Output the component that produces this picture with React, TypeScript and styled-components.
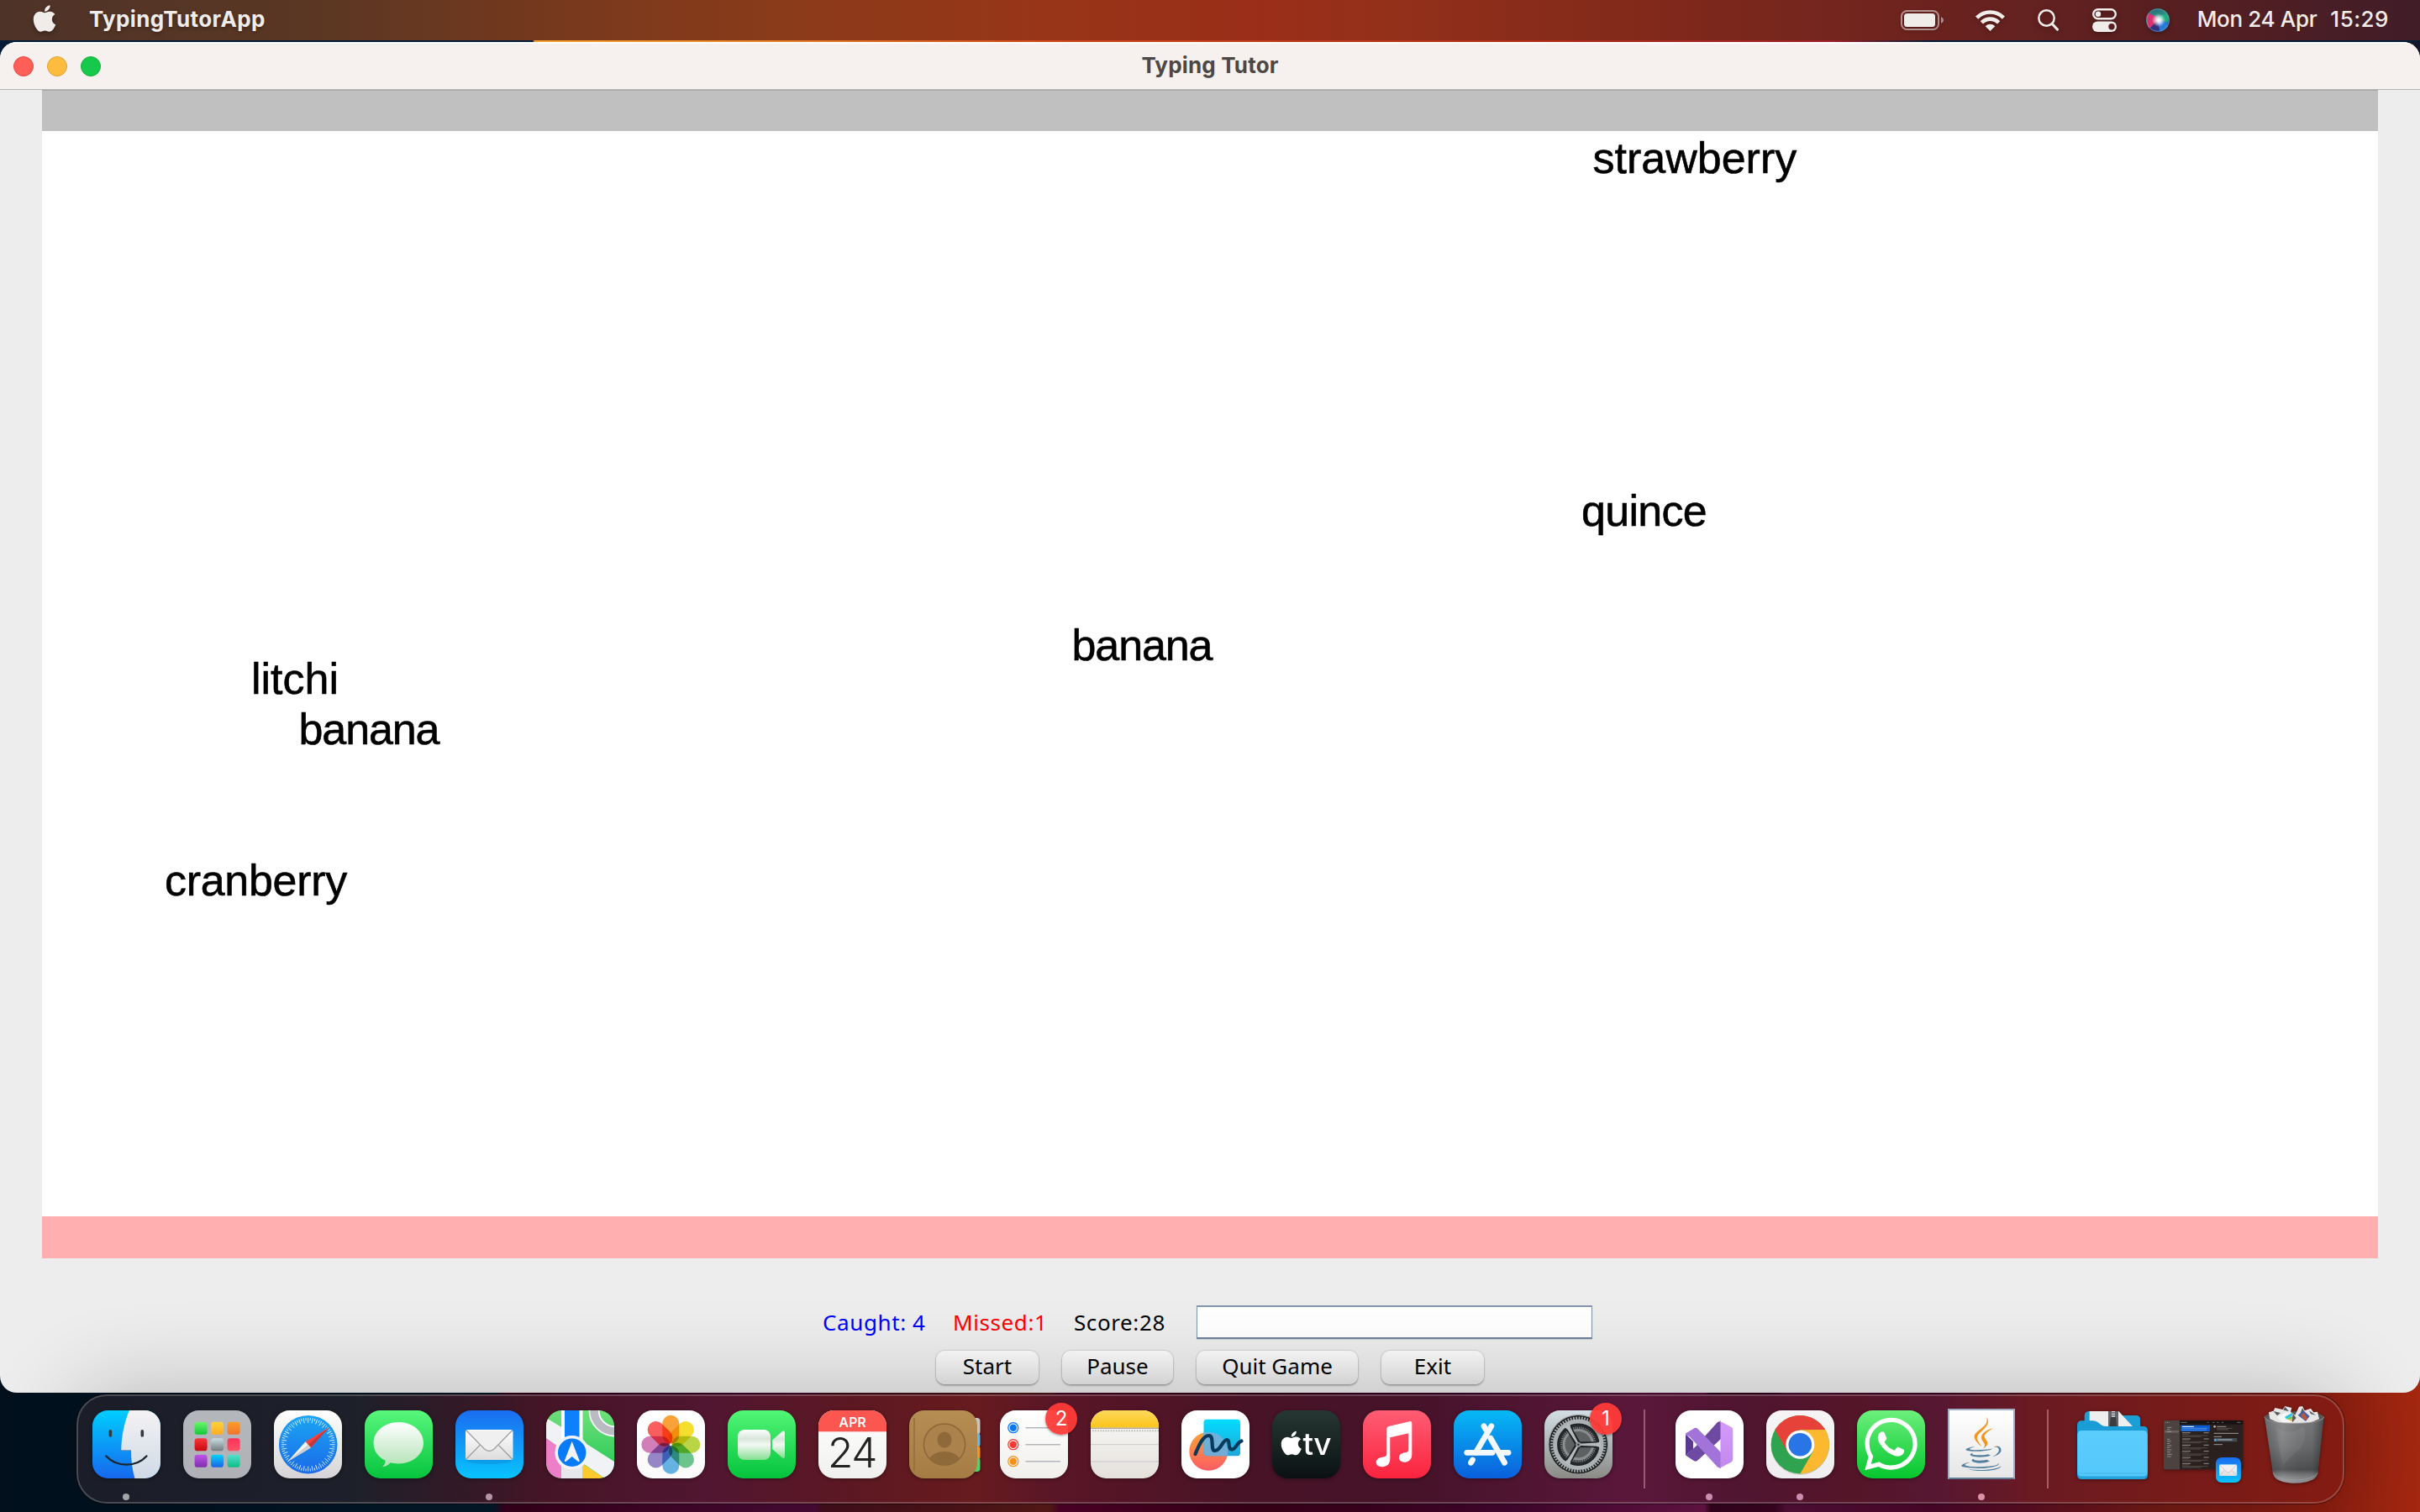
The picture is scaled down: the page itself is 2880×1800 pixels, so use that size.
import React from "react";
import styled, { createGlobalStyle } from "styled-components";
import { FaApple, FaJava, FaWhatsapp } from "react-icons/fa";

const Global = createGlobalStyle`
  * { box-sizing: border-box; }
  html, body { margin: 0; padding: 0; overflow: hidden; }
`;

/* ---------- Desktop ---------- */

const Desktop = styled.div`
  width: 2880px;
  height: 1800px;
  overflow: hidden;
  display: flex;
  flex-direction: column;
  font-family: Inter, "Liberation Sans", sans-serif;
  background:
    linear-gradient(90deg, #001c36 0 634px, #f5a02a 636px, #e8862a 900px, #d2481c 1250px, #b02a18 1900px, #a01e26 2180px, #001c36 2300px, #001c36 100%) 0 48px / 2880px 2px no-repeat,
    linear-gradient(90deg, #001a33 0 1440px, #14142c 2880px) 0 0 / 2880px 900px no-repeat,
    linear-gradient(90deg, #00101c 0, #031a2b 588px, #38001c 600px, #4d0b38 970px, #450f1b 980px, #5a1a18 1250px, #52002a 1262px, #3a0018 1500px, #450630 1800px, #6a1547 2028px, #36031f 2036px, #3c0422 2112px, #55103a 2126px, #4d062c 2300px, #741a16 2560px, #8a1d10 2760px, #a52810 2880px) 0 900px / 2880px 900px no-repeat;
`;

const MenuBar = styled.header`
  flex: none;
  height: 48px;
  display: flex;
  align-items: center;
  padding: 0 37px 0 39px;
  color: #efecea;
  font-size: 26px;
  line-height: 48px;
  background: linear-gradient(90deg, #4e3328 0, #5b3723 380px, #7a391c 700px, #8a3b1a 930px, #983518 1250px, #9a2d18 1500px, #93301a 1650px, #7f281b 2000px, #6c231f 2300px, #561f21 2600px, #401d28 2880px);
`;

const AppleMark = styled(FaApple)`
  width: 28px;
  height: 36px;
  margin-top: -4px;
  filter: drop-shadow(0 2px 3px rgba(0, 0, 0, 0.35));
`;

const AppName = styled.span`
  margin: -3px auto 0 39px;
  font-weight: 700;
  letter-spacing: 0.36px;
  text-shadow: 0 2px 4px rgba(0, 0, 0, 0.3);
`;

const StatusIcon = styled.svg<{ $gap: number }>`
  flex: none;
  display: block;
  margin-right: ${(p) => p.$gap}px;
  filter: drop-shadow(0 2px 3px rgba(0, 0, 0, 0.3));
`;

const Clock = styled.time`
  display: flex;
  gap: 16px;
  margin-top: -3px;
  white-space: nowrap;
  font-weight: 500;
`;

const ClockPart = styled.span<{ $tracking: number }>`
  letter-spacing: ${(p) => p.$tracking}px;
`;

/* ---------- Window ---------- */

const Window = styled.main`
  flex: none;
  height: 1608px;
  margin-top: 2px;
  display: flex;
  flex-direction: column;
  overflow: hidden;
  border-radius: 20px;
  background: #ededed;
`;

const TitleBar = styled.div`
  flex: none;
  height: 57px;
  display: grid;
  grid-template-columns: 1fr auto 1fr;
  align-items: center;
  padding: 0 16px;
  background: #f6f0ee;
  border-top: 2px solid #fff;
  border-bottom: 1px solid #b9b5b4;
`;

const Lights = styled.div`
  display: flex;
  gap: 16px;
`;

const Light = styled.span<{ $fill: string; $rim: string }>`
  width: 24px;
  height: 24px;
  border-radius: 50%;
  background: ${(p) => p.$fill};
  border: 1px solid ${(p) => p.$rim};
`;

const Title = styled.h1`
  margin: -3px 0 0;
  font-size: 26px;
  line-height: 50px;
  font-weight: 700;
  letter-spacing: 0.18px;
  color: #4b4846;
`;

const Board = styled.section`
  position: relative;
  flex: none;
  height: 1391px;
  margin: 0 50px;
  display: flex;
  flex-direction: column;
  justify-content: space-between;
  background: #fff;
`;

const Zone = styled.div<{ $color: string; $height: number; $edge?: string }>`
  height: ${(p) => p.$height}px;
  background: ${(p) => p.$color};
  border-top: ${(p) => (p.$edge ? `1px solid ${p.$edge}` : "none")};
`;

const FallingWord = styled.span<{ $x: number; $y: number; $tracking: number }>`
  position: absolute;
  left: ${(p) => p.$x}px;
  top: ${(p) => p.$y}px;
  font: 52px/60px "Liberation Sans", Arial, sans-serif;
  letter-spacing: ${(p) => p.$tracking}px;
  -webkit-text-stroke: 0.6px #000;
  color: #000;
`;

const Controls = styled.section`
  flex: 1;
  display: flex;
  flex-direction: column;
  align-items: center;
  padding-top: 56px;
  font-family: "Noto Sans", "Open Sans", sans-serif;
  font-size: 26px;
`;

const ScoreRow = styled.div`
  display: flex;
  align-items: center;
  height: 39px;
  margin-right: 6px;
`;

const Stat = styled.span<{ $color: string; $width: number }>`
  width: ${(p) => p.$width}px;
  color: ${(p) => p.$color};
  letter-spacing: 0.6px;
  line-height: 38px;
  white-space: pre;
`;

const WordInput = styled.input`
  width: 471px;
  height: 40px;
  margin: 0;
  padding: 0 8px;
  border: 2px solid #8195ad;
  border-top-color: #8496ae;
  border-bottom-color: #718296;
  border-left: 1px solid #8195ad;
  border-right: 1px solid #8195ad;
  background: #fff;
  box-shadow: 0 1px 1px #cfd5dc;
  outline: none;
  font: inherit;
`;

const ButtonRow = styled.div`
  display: flex;
  gap: 28px;
  margin-top: 15px;
`;

const PushButton = styled.button<{ $width: number }>`
  width: ${(p) => p.$width}px;
  height: 40px;
  padding: 0 0 3px;
  border: 0;
  border-radius: 10px;
  background: linear-gradient(#fbfbfb, #f4f4f4 50%, #e9e9e9);
  box-shadow: 0 0 2px rgba(0, 0, 0, 0.35), 0 2px 2px rgba(0, 0, 0, 0.22);
  color: #000;
  font: inherit;
  line-height: 37px;
  white-space: nowrap;
`;

/* ---------- Dock ---------- */

const DockBar = styled.nav`
  position: relative;
  flex: none;
  align-self: flex-start;
  width: 2699px;
  height: 130px;
  margin: 2px 0 0 91px;
  padding-left: 3px;
  display: flex;
  border: 2px solid rgba(255, 255, 255, 0.2);
  border-radius: 36px;
  background-clip: border-box;
  background-origin: border-box;
  background-image: linear-gradient(90deg, #1b1e29 0, #1d202a 330px, #2c1b27 420px, #451526 560px, #521631 760px, #5c1822 920px, #671b1e 1070px, #5a1627 1160px, #481326 1390px, #46132a 1600px, #5a173a 1850px, #501530 1980px, #551529 2120px, #561732 2210px, #6a1a22 2330px, #751b1a 2480px, #841b12 2699px);
  box-shadow: 0 0 0 1px rgba(0, 0, 0, 0.45), 0 0 110px rgba(0, 0, 0, 0.24);
`;

const Slot = styled.div`
  position: relative;
  flex: none;
  width: 108px;
  height: 126px;
  padding-top: 17px;
  display: flex;
  flex-direction: column;
  align-items: center;
  justify-content: space-between;
`;

const Running = styled.i<{ $tint: string }>`
  width: 8px;
  height: 8px;
  margin-bottom: 2px;
  border-radius: 50%;
  background: ${(p) => p.$tint};
`;

const Divider = styled.i`
  flex: none;
  width: 2px;
  height: 94px;
  margin: 16px 22px 0 24px;
  background: rgba(255, 190, 210, 0.4);
`;

const Badge = styled.span`
  position: absolute;
  left: 68px;
  top: 8px;
  width: 38px;
  height: 38px;
  border-radius: 50%;
  background: rgba(255, 59, 56, 0.95);
  color: #fff;
  font-size: 24px;
  line-height: 38px;
  text-align: center;
  box-shadow: 0 1px 3px rgba(0, 0, 0, 0.4);
`;

const Art = styled.svg`
  flex: none;
  display: block;
  overflow: visible;
  filter: drop-shadow(0 1px 2px rgba(0, 0, 0, 0.4));
`;

const JavaPage = styled.div`
  flex: none;
  display: flex;
  justify-content: center;
  width: 80px;
  height: 84px;
  margin-top: -2px;
  padding-top: 8px;
  background: linear-gradient(#fff, #e6e6e6);
  border: 2px solid #9fb0c4;
  border-bottom-color: #5f7a92;
`;

/* ---------- Icon art ---------- */

function Grad({ id, from, to }: { id: string; from: string; to: string }) {
  return (
    <linearGradient id={id} x1="0" y1="0" x2="0" y2="1">
      <stop offset="0" stopColor={from} />
      <stop offset="1" stopColor={to} />
    </linearGradient>
  );
}

function Tile({ id, from, to, children }: { id: string; from: string; to: string; children?: React.ReactNode }) {
  return (
    <Art width="81" height="81" viewBox="0 0 81 81">
      <defs>
        <Grad id={`${id}-bg`} from={from} to={to} />
        <clipPath id={`${id}-clip`}>
          <rect width="81" height="81" rx="18.5" />
        </clipPath>
      </defs>
      <g clipPath={`url(#${id}-clip)`}>
        <rect width="81" height="81" fill={`url(#${id}-bg)`} />
        {children}
      </g>
    </Art>
  );
}

const Finder = () => (
  <Tile id="finder" from="#00cdff" to="#1668ee">
    <defs><Grad id="finder-face" from="#f4f2f4" to="#cfdae6" /></defs>
    <path d="M44 0C38 14 34.5 30 34.3 47.3H46C46 60 47.5 71 50.4 81H81V0Z" fill="url(#finder-face)" />
    <path d="M34.3 47.6H46" stroke="#8d99a5" strokeWidth="1" />
    <path d="M21.4 24.7V30M59.3 24.7V30" stroke="#333a40" strokeWidth="3.6" strokeLinecap="round" />
    <path d="M16.4 54.5C29 68 52 68 64.4 54.5" fill="none" stroke="#1c252c" strokeWidth="2.4" strokeLinecap="round" />
  </Tile>
);

const padColors = [
  ["#6df56c", "#10c83b"], ["#ffd23e", "#ffac22"], ["#fd9d27", "#f2742c"],
  ["#f9353a", "#c40a10"], ["#c8dde2", "#747a7c"], ["#fd3458", "#ff5064"],
  ["#bd56ea", "#7f2cab"], ["#08d3fd", "#1a62e8"], ["#54dfcd", "#0fbc85"],
];
const Launchpad = () => (
  <Tile id="pad" from="#b4b7bc" to="#b0b1b6">
    {padColors.map(([a, b], i) => (
      <g key={i}>
        <defs><Grad id={`pad-${i}`} from={a} to={b} /></defs>
        <rect x={13.6 + (i % 3) * 19.5} y={13.8 + Math.floor(i / 3) * 19.5} width="15" height="15" rx="3.4" fill={`url(#pad-${i})`} />
      </g>
    ))}
  </Tile>
);

const Safari = () => (
  <Tile id="safari" from="#ffffff" to="#d6d4d6">
    <defs><Grad id="safari-dial" from="#1ba5f3" to="#1a6ae8" /></defs>
    <circle cx="40.7" cy="40.7" r="34.8" fill="url(#safari-dial)" />
    {Array.from({ length: 72 }, (_, i) => (
      <path key={i} d={i % 2 ? "M40.7 8.8V12" : "M40.7 8.8V14.8"} stroke="#d9efff" strokeWidth="0.9" transform={`rotate(${i * 5} 40.7 40.7)`} />
    ))}
    <path d="M65.5 20.2L37.6 37.2L43.8 44.4Z" fill="#f0453f" />
    <path d="M65.5 20.2L40.7 40.7L43.8 44.4Z" fill="#c93638" />
    <path d="M16.2 61L37.6 37.2L43.8 44.4Z" fill="#f5f5f5" />
    <path d="M16.2 61L40.7 40.7L43.8 44.4Z" fill="#cfcfd2" />
  </Tile>
);

const Messages = () => (
  <Tile id="msg" from="#58f77c" to="#05c43d">
    <defs><Grad id="msg-b" from="#ffffff" to="#b2e2b5" /></defs>
    <path d="M40.3 14C57 14 70 25 70 38.7S57 63.4 40.3 63.4C37 63.4 33.5 63 30.6 62.3C28 65 25 67 21 67.3C23.5 65 25 62.5 24.5 59.8C16 55.5 10.5 48 10.5 38.7C10.5 25 24 14 40.3 14Z" fill="url(#msg-b)" />
  </Tile>
);

const Envelope = () => (
  <>
    <defs><Grad id="env" from="#ffffff" to="#dcdcdc" /></defs>
    <rect x="12" y="23" width="56.5" height="36" rx="3" fill="url(#env)" />
    <path d="M13 58L29 41.5M67.5 58L51.5 41.5" stroke="#9c9c9c" strokeWidth="1.1" />
    <path d="M13 24L34 45.5Q40.3 51.5 46.5 45.5L67.5 24" fill="#f0f0f0" stroke="#a3a3a3" strokeWidth="1.4" />
  </>
);

const Mail = () => (
  <Tile id="mail" from="#1a6df0" to="#08c4fd">
    <ellipse cx="40" cy="60" rx="27" ry="4" fill="#0a78c8" opacity="0.3" />
    <Envelope />
  </Tile>
);

const Maps = () => (
  <Tile id="maps" from="#6fe07a" to="#1fc552">
    <path d="M0 33L22 48V81H0Z" fill="#ec7fc8" />
    <path d="M41 62L70 81H41Z" fill="#fcc92e" />
    <path d="M0 9L20 21L42 36L81 61V81H70L42 62L20 47L0 33Z" fill="#f1f2f5" />
    <rect x="18" y="48" width="25" height="33" fill="#e6e6eb" />
    <rect x="18" y="0" width="25.5" height="50" fill="#fafafa" />
    <rect x="22" y="0" width="17.5" height="50" fill="#0f80fb" />
    <circle cx="82" cy="0" r="25" fill="none" stroke="#fff" strokeWidth="13" />
    <circle cx="82" cy="0" r="25" fill="none" stroke="#b9bac2" strokeWidth="9.5" />
    <circle cx="30.7" cy="50.3" r="18.5" fill="#087cf8" stroke="#f1f2f6" strokeWidth="3.6" />
    <path d="M30.7 37L39.5 59.5Q40 62 37.5 60.5L30.7 55L24 60.5Q21.5 62 22 59.5Z" fill="#f4f4f6" />
  </Tile>
);

const petals = ["#fb9a28", "#f6dd1c", "#b5d334", "#5fc283", "#59aee4", "#8e7fc6", "#d174b4", "#fb5150"];
const Petal = styled.rect`
  mix-blend-mode: multiply;
`;
const Photos = () => (
  <Tile id="photos" from="#ffffff" to="#fbfbfb">
    {petals.map((c, i) => (
      <Petal key={c} x="30.3" y="5.7" width="20" height="34" rx="10" fill={c} opacity="0.92" transform={`rotate(${i * 45} 40.3 40.7)`} />
    ))}
    <circle cx="40.3" cy="40.7" r="1.3" fill="#fff" />
  </Tile>
);

const FaceTime = () => (
  <Tile id="ft" from="#52f677" to="#04c33c">
    <defs>
      <linearGradient id="ft-b" x1="0" y1="0" x2="0" y2="1">
        <stop offset="0" stopColor="#fff" />
        <stop offset="0.3" stopColor="#d8e6da" />
        <stop offset="0.5" stopColor="#f3f8f3" />
        <stop offset="1" stopColor="#84df91" />
      </linearGradient>
    </defs>
    <rect x="12" y="23" width="39" height="36" rx="8" fill="url(#ft-b)" />
    <path d="M53 35.5L64.5 25.5Q68 23 68 27V54.5Q68 58.5 64.5 56L53 46Z" fill="url(#ft-b)" />
  </Tile>
);

const Calendar = () => (
  <Tile id="cal" from="#ffffff" to="#f0f0ee">
    <rect width="81" height="25.3" fill="#fb5650" />
    <text x="40.5" y="19.7" textAnchor="middle" fontFamily="Inter, sans-serif" fontWeight="600" fontSize="16" fill="#fff">APR</text>
    <text x="40" y="68.3" textAnchor="middle" fontFamily="Inter, sans-serif" fontWeight="300" fontSize="49.5" letterSpacing="-1.3" fill="#222">24</text>
  </Tile>
);

const Contacts = () => (
  <Art width="81" height="81" viewBox="0 0 81 81">
    <defs><Grad id="ct" from="#b58e54" to="#a67c45" /></defs>
    <rect x="66" y="9" width="18.5" height="20" rx="4" fill="#c9c6c0" />
    <rect x="66" y="27" width="18.5" height="17" rx="4" fill="#58bdf1" />
    <rect x="66" y="42" width="18.5" height="17" rx="4" fill="#fa9123" />
    <rect x="66" y="56" width="18.5" height="17" rx="4" fill="#4cd568" />
    <rect width="81" height="81" rx="18" fill="url(#ct)" />
    <path d="M6 9V72" stroke="#8d6836" strokeWidth="1.2" />
    <circle cx="42" cy="40.5" r="24.6" fill="#ab824b" stroke="#8c6737" strokeWidth="1.5" />
    <ellipse cx="42" cy="35" rx="8.5" ry="9.6" fill="#8e6939" />
    <path d="M24.5 56.5Q30 49 42 49T59.5 56.5Q52 65.5 42 65.5T24.5 56.5Z" fill="#8e6939" />
  </Art>
);

const Reminders = () => (
  <Tile id="rem" from="#ffffff" to="#f0efec">
    {["#0a78f6", "#f93a34", "#f5921e"].map((c, i) => (
      <g key={c}>
        <circle cx="15.8" cy={20.7 + i * 20} r="6" fill="none" stroke={c} strokeWidth="1.3" />
        <circle cx="15.8" cy={20.7 + i * 20} r="4.2" fill={c} />
        <path d={`M30.5 ${20.7 + i * 20}H72`} stroke="#b4b6bb" strokeWidth="1.6" />
      </g>
    ))}
  </Tile>
);

const Notes = () => (
  <Tile id="notes" from="#fbfafa" to="#e4e1db">
    <defs><Grad id="notes-t" from="#fdd95b" to="#fcc41c" /></defs>
    <rect width="81" height="20.5" fill="url(#notes-t)" />
    <path d="M0 21.2H81" stroke="#b3a88c" strokeWidth="1.4" />
    <path d="M2 24.4H81" stroke="#b5b4b2" strokeWidth="1.6" strokeDasharray="1.6 1.5" />
    <path d="M0 40.7H81M0 61H81" stroke="#d2d1d2" strokeWidth="1.3" />
  </Tile>
);

const Freeform = () => (
  <Tile id="ff" from="#ffffff" to="#ffffff">
    <defs>
      <Grad id="ff-o" from="#fca336" to="#fc5c64" />
      <Grad id="ff-c" from="#03dcfe" to="#22a6d8" />
      <clipPath id="ff-sq"><rect x="26.5" y="10.7" width="43.5" height="43.6" rx="3.5" /></clipPath>
    </defs>
    <circle cx="32.3" cy="48.7" r="23" fill="url(#ff-o)" />
    <rect x="26.5" y="10.7" width="43.5" height="43.6" rx="3.5" fill="url(#ff-c)" />
    <circle cx="32.3" cy="48.7" r="23" fill="#85add4" opacity="0.8" clipPath="url(#ff-sq)" />
    <path d="M16.5 52C20 44 25 30 32.5 30C40 30 33.5 48 40 48C47 48 49 35 54 35C59 35 54 46.5 60 46.5C65 46.5 66 38 71.5 36.5" fill="none" stroke="#083a5c" strokeWidth="4.2" strokeLinecap="round" />
  </Tile>
);

const AppleTV = () => (
  <Tile id="tv" from="#263732" to="#0b1113">
    <FaApple x="6.4" y="22.7" size={32.7} color="#fff" />
    <text x="36.5" y="53" fontFamily="Inter, sans-serif" fontWeight="500" fontSize="37" letterSpacing="-0.5" fill="#fff">tv</text>
  </Tile>
);

const Music = () => (
  <Tile id="music" from="#fe5d74" to="#fb233e">
    <path d="M28.3 22Q28.3 19.5 30.8 19L55.5 13.2Q58.3 12.7 58.3 15.5V52.5C58.3 58.5 54.5 61.7 49.6 61.7C45.5 61.7 43 59.5 43 56.5C43 52.5 46 51 50 50.3C53.5 49.6 54.3 49 54.3 46V27.3L32.3 32.2V57.5C32.3 64 28.5 67.2 22.8 67.2C18.5 67.2 15.8 65 15.8 62C15.8 58 19 56.5 23 55.8C27.2 55 28.3 54.3 28.3 51.5Z" fill="#fff" />
  </Tile>
);

const AppStore = () => (
  <Tile id="as" from="#06b9f5" to="#0a5fdc">
    <g stroke="#f4f8fb" strokeWidth="6.8" strokeLinecap="round" fill="none">
      <path d="M15.8 50.3H46" />
      <path d="M55 50.3H65" />
      <path d="M36 18.8L38 22.5" />
      <path d="M44.8 18.8L26.5 50" />
      <path d="M22.5 59L20.5 62.3" />
      <path d="M43.8 33L60.5 62.3" />
    </g>
  </Tile>
);

const Settings = () => (
  <Tile id="set" from="#d3dfe5" to="#8b8a86">
    <circle cx="40.3" cy="40.7" r="35" fill="#1f2122" />
    <circle cx="40.3" cy="40.7" r="31.5" fill="none" stroke="#a7adaf" strokeWidth="3.4" strokeDasharray="1.7 1.6" />
    <circle cx="40.3" cy="40.7" r="27.7" fill="none" stroke="#adb3b5" strokeWidth="5" />
    <circle cx="40.3" cy="40.7" r="24" fill="#27292a" />
    <circle cx="40.3" cy="40.7" r="20" fill="none" stroke="#7c8082" strokeWidth="2.6" strokeDasharray="1.2 1.1" />
    <circle cx="40.3" cy="40.7" r="17.3" fill="#5e6162" stroke="#8b8f91" strokeWidth="3" />
    {[0, 120, 240].map((a) => (
      <path key={a} d="M40.3 40.7H65" stroke="#202224" strokeWidth="7" transform={`rotate(${a} 40.3 40.7)`} />
    ))}
    {[0, 120, 240].map((a) => (
      <path key={a} d="M40.3 39.7L62 38.6Q65.5 38 67 35.5V46Q65.5 43.4 62 42.8L40.3 41.7Z" fill="#b5bbbd" transform={`rotate(${a} 40.3 40.7)`} />
    ))}
    <circle cx="40.3" cy="40.7" r="3" fill="#999ea0" />
    <circle cx="40.3" cy="40.7" r="1.3" fill="#35383a" />
    <circle cx="40.3" cy="40.7" r="35.3" fill="none" stroke="#8f9496" strokeWidth="1" />
  </Tile>
);

const VisualStudio = () => (
  <Tile id="vs" from="#ffffff" to="#ffffff">
    <defs><Grad id="vs-r" from="#d59bfa" to="#c188ee" /></defs>
    <path d="M12 28V53.5L21 46V37Z" fill="#5a3a91" />
    <path d="M12 53.5L21 59.5Q24 62 27 59L54 34V12.5L50 14L24 43Z" fill="#6e4aa3" />
    <path d="M12 27.5L22 21.5Q24 20 26.5 22L54 50V69L50 67.5L17 31.5Q14 29 12 30Z" fill="#a273d9" />
    <path d="M51.8 12.3L66.5 20Q68.3 21 68.3 23V58Q68.3 60.5 66.5 61.5L51.8 69.3L53.5 66V15Z" fill="url(#vs-r)" />
  </Tile>
);

const Chrome = () => (
  <Tile id="chrome" from="#f7f4f6" to="#efedef">
    <circle cx="40.3" cy="42.3" r="34.5" fill="#000" opacity="0.13" />
    <circle cx="40.3" cy="40.7" r="34.7" fill="#2fa350" />
    <path d="M40.3 6A34.7 34.7 0 0 1 70.35 23.35H40.3L25.3 49.35L10.25 23.35A34.7 34.7 0 0 1 40.3 6Z" fill="#e7423a" />
    <path d="M70.35 23.35A34.7 34.7 0 0 1 40.3 75.4L55.3 49.4L52 23.35Z" fill="#fcb930" />
    <path d="M40.3 23.35H70.35A34.7 34.7 0 0 1 74 33L45 35Z" fill="#fcb930" />
    <circle cx="40.3" cy="40.7" r="17" fill="#fff" />
    <circle cx="40.3" cy="40.7" r="13.8" fill="#2a75e6" />
  </Tile>
);

const WhatsApp = () => (
  <Tile id="wa" from="#6cf07c" to="#04c62e">
    <FaWhatsapp x="4.8" y="4.3" size={71.4} color="#fff" />
  </Tile>
);

const Java = () => (
  <JavaPage>
    <svg width="64" height="64" viewBox="0 0 64 64">
      <defs>
        <linearGradient id="java-ink" x1="0" y1="0" x2="0" y2="1">
          <stop offset="0.54" stopColor="#f4941f" />
          <stop offset="0.54" stopColor="#557f9f" />
        </linearGradient>
      </defs>
      <FaJava size={64} fill="url(#java-ink)" />
    </svg>
  </JavaPage>
);

const ZipFolder = () => (
  <Art width="84" height="83" viewBox="36 54 252 249">
    <defs><Grad id="fold" from="#5bcdfd" to="#55c8fb" /></defs>
    <path d="M62 110V74Q62 58 78 57H150L180 72H246Q261 72 261 86V120H62Z" fill="#1c9fd4" />
    <path d="M80 57H184L240 118H80Z" fill="#eeeeee" />
    <path d="M147 57H183V118H147Z" fill="#62666a" />
    <path d="M165 57V118" stroke="#d5d8da" strokeWidth="12" strokeDasharray="4 4" />
    <path d="M156 78H174L178 112H152Z" fill="#3b3e41" />
    <path d="M36 108Q36 91 52 91H92Q102 91 110 97L124 107Q130 111 140 111H272Q288 111 288 127V284Q288 300 272 300H52Q36 300 36 284Z" fill="#1a9dd6" />
    <path d="M37 142Q37 126 53 126H271Q287 126 287 142V274Q287 290 271 290H53Q37 290 37 274Z" fill="url(#fold)" />
    <path d="M38 279H286" stroke="#3eb4ea" strokeWidth="2" />
    <path d="M37 276Q37 298 53 298H271Q287 298 287 276V289H37Z" fill="#2fa9e2" opacity="0.6" />
  </Art>
);

const WindowArt = styled(Art)`
  margin-top: 12px;
`;

const MiniMail = () => (
  <WindowArt width="94.3" height="75" viewBox="345 93 283 225">
    <defs><Grad id="mm" from="#1a6df0" to="#08c4fd" /></defs>
    <rect x="345" y="93" width="283" height="175" rx="4" fill="#2a211f" />
    <path d="M349 93H402V268H349Q345 268 345 264V97Q345 93 349 93Z" fill="#4c4340" />
    <rect x="402" y="93" width="226" height="14" fill="#171313" />
    <rect x="348" y="129" width="51" height="8" fill="#6a615e" />
    <circle cx="352" cy="100" r="2" fill="#e2523f" />
    <circle cx="358" cy="100" r="2" fill="#e0a534" />
    <circle cx="364" cy="100" r="2" fill="#3faa42" />
    {[118, 125, 133, 160, 167, 175, 183, 190, 198, 206, 214, 222].map((y) => (
      <path key={y} d={`M357 ${y}H${367 + (y % 5) * 2}`} stroke="#b5b0ad" strokeWidth="2" />
    ))}
    <rect x="405" y="110" width="105" height="22" rx="2" fill="#0a5bd0" />
    <path d="M411 115H453" stroke="#fff" strokeWidth="3" />
    <path d="M411 121H500M411 127H498" stroke="#8fb9f2" strokeWidth="1.6" />
    {[137, 159, 181, 203, 225, 247].map((y) => (
      <g key={y}>
        <path d={`M411 ${y}H441M488 ${y}H506`} stroke="#bdb8b6" strokeWidth="2.2" />
        <path d={`M411 ${y + 5}H436M411 ${y + 10}H502M411 ${y + 14}H478`} stroke="#6b6461" strokeWidth="1.8" />
      </g>
    ))}
    <path d="M406 100H428M500 100H506M520 100H526M535 100H541M552 100H558M607 100H620" stroke="#7d7876" strokeWidth="2.6" />
    <circle cx="527" cy="115" r="4" fill="#b9b5b3" />
    <path d="M535 115H568M524 139H612M524 151H552M524 179H555" stroke="#c6c2c0" strokeWidth="2.2" />
    <path d="M535 121H590M535 126H575" stroke="#746e6b" strokeWidth="1.8" />
    <rect x="524" y="156" width="83" height="13" rx="2" fill="#414c55" />
    <rect x="526" y="159" width="7" height="8" fill="#52b1ef" />
    <path d="M536 162H590" stroke="#e8e8e8" strokeWidth="2.2" />
    <rect x="531" y="225" width="90" height="90" rx="21" fill="url(#mm)" />
    <g transform="translate(530 225) scale(1.12)"><Envelope /></g>
  </WindowArt>
);

const BinArt = styled(Art)`
  margin-top: -5px;
`;

const Trash = () => (
  <BinArt width="71" height="92" viewBox="703 38 213 276">
    <defs>
      <linearGradient id="bin" x1="0" y1="0" x2="1" y2="0">
        <stop offset="0" stopColor="#6c6e71" />
        <stop offset="0.3" stopColor="#8d8f91" />
        <stop offset="0.55" stopColor="#7c7e80" />
        <stop offset="0.8" stopColor="#77797b" />
        <stop offset="1" stopColor="#4c4e50" />
      </linearGradient>
      <linearGradient id="bin-s" x1="0" y1="0" x2="0" y2="1">
        <stop offset="0" stopColor="#000" stopOpacity="0" />
        <stop offset="0.45" stopColor="#000" stopOpacity="0.15" />
        <stop offset="0.8" stopColor="#000" stopOpacity="0.38" />
        <stop offset="1" stopColor="#fff" stopOpacity="0.15" />
      </linearGradient>
    </defs>
    <ellipse cx="809" cy="77" rx="106" ry="20" fill="#56585a" />
    <path d="M722 84L718 60L735 55L740 44L768 50L776 38L800 44L796 58L812 70L826 40L838 38L846 54L868 46L878 60L892 58L898 84L860 100H760Z" fill="#e6e6e6" />
    <path d="M735 56L760 62L748 72ZM776 40L790 56L770 52ZM800 60L816 80L802 96ZM862 54L886 70L868 66ZM838 44L830 66L846 60Z" fill="#56585b" />
    <path d="M748 78L780 60L804 66L800 94L770 98Z" fill="#f6f6f6" />
    <path d="M775 76L800 63L803 72L780 84Z" fill="#2cc5e6" />
    <path d="M780 84L800 73L803 82L790 86Z" fill="#61cb4b" />
    <path d="M790 87L803 83L801 92Z" fill="#f0a63b" />
    <path d="M822 70L842 54L864 74L850 92Z" fill="#4c5f9c" />
    <path d="M832 70L844 62L856 82L846 88Z" fill="#b9573a" />
    <path d="M703 76C704 90 750 99 809 99S914 90 915 76L893 278C890 300 855 313 811 313S736 300 733 278Z" fill="url(#bin)" />
    <path d="M703 76C704 90 750 99 809 99S914 90 915 76L893 278C890 300 855 313 811 313S736 300 733 278Z" fill="url(#bin-s)" />
    <path d="M703 76C704 90 750 99 809 99S914 90 915 76" fill="none" stroke="#a7a9ab" strokeWidth="2.5" />
    <path d="M733 276C742 294 775 302 811 302S882 294 893 276" fill="none" stroke="#a6a8aa" strokeWidth="2" opacity="0.7" />
    <path d="M745 110Q790 150 840 110Q860 140 830 190Q790 220 770 250Q750 180 745 110Z" fill="#fff" opacity="0.06" />
  </BinArt>
);

/* ---------- Data ---------- */

type DockItem = { name: string; icon: () => React.ReactElement; badge?: number; dot?: string } | "divider";

const dockItems: DockItem[] = [
  { name: "Finder", icon: Finder, dot: "#a3a5ab" },
  { name: "Launchpad", icon: Launchpad },
  { name: "Safari", icon: Safari },
  { name: "Messages", icon: Messages },
  { name: "Mail", icon: Mail, dot: "#b596a6" },
  { name: "Maps", icon: Maps },
  { name: "Photos", icon: Photos },
  { name: "FaceTime", icon: FaceTime },
  { name: "Calendar", icon: Calendar },
  { name: "Contacts", icon: Contacts },
  { name: "Reminders", icon: Reminders, badge: 2 },
  { name: "Notes", icon: Notes },
  { name: "Freeform", icon: Freeform },
  { name: "TV", icon: AppleTV },
  { name: "Music", icon: Music },
  { name: "App Store", icon: AppStore },
  { name: "System Settings", icon: Settings, badge: 1 },
  "divider",
  { name: "Visual Studio", icon: VisualStudio, dot: "#cc8db2" },
  { name: "Chrome", icon: Chrome, dot: "#cc8db0" },
  { name: "WhatsApp", icon: WhatsApp },
  { name: "Java", icon: Java, dot: "#dc93a6" },
  "divider",
  { name: "Archive", icon: ZipFolder },
  { name: "Mail window", icon: MiniMail },
  { name: "Trash", icon: Trash },
];

const words = [
  { text: "strawberry", x: 1845.5, y: 51, tracking: 0 },
  { text: "quince", x: 1832, y: 471, tracking: -0.7 },
  { text: "banana", x: 1225.5, y: 631, tracking: -1.1 },
  { text: "litchi", x: 249, y: 671, tracking: 0 },
  { text: "banana", x: 305.5, y: 731, tracking: -1.1 },
  { text: "cranberry", x: 146, y: 911, tracking: -0.3 },
];

export default function App() {
  return (
    <>
      <Global />
      <Desktop>
        <MenuBar>
          <AppleMark />
          <AppName>TypingTutorApp</AppName>
          <StatusIcon $gap={38} width="51" height="24" viewBox="0 0 51 24">
            <rect x="1" y="1" width="44" height="22" rx="6.5" fill="none" stroke="#fff" strokeOpacity="0.5" strokeWidth="2" />
            <rect x="4" y="4" width="37" height="16" rx="3.5" fill="#efecea" />
            <path d="M48 8Q51 9.5 51 12T48 16Z" fill="#fff" fillOpacity="0.5" />
          </StatusIcon>
          <StatusIcon $gap={39} width="35" height="25" viewBox="0 0 35 25">
            <g fill="none" stroke="#efecea" strokeWidth="4.7">
              <path d="M1.6 9.1A22.5 22.5 0 0 1 33.4 9.1" />
              <path d="M7.4 14.9A14.2 14.2 0 0 1 27.6 14.9" />
            </g>
            <path d="M17.5 25L11.7 19.2A8.2 8.2 0 0 1 23.3 19.2Z" fill="#efecea" />
          </StatusIcon>
          <StatusIcon $gap={40} width="25" height="26" viewBox="0 0 25 26">
            <circle cx="10.5" cy="10.5" r="9.2" fill="none" stroke="#efecea" strokeWidth="2.5" />
            <path d="M17.3 17.5L23.4 24" stroke="#efecea" strokeWidth="3.2" strokeLinecap="round" />
          </StatusIcon>
          <StatusIcon $gap={35} width="29" height="28" viewBox="0 0 29 28">
            <rect x="1.2" y="1.2" width="26.6" height="11" rx="5.5" fill="none" stroke="#efecea" strokeWidth="2.4" />
            <circle cx="7" cy="6.7" r="3.2" fill="#efecea" />
            <rect x="0" y="15.5" width="29" height="12.5" rx="6.2" fill="#efecea" />
            <circle cx="23" cy="21.7" r="3.7" fill="#571f21" />
          </StatusIcon>
          <StatusIcon $gap={33} width="28" height="28" viewBox="0 0 28 28">
            <defs>
              <radialGradient id="siri-core">
                <stop offset="0" stopColor="#fff" />
                <stop offset="0.35" stopColor="#fff" stopOpacity="0.8" />
                <stop offset="1" stopColor="#fff" stopOpacity="0" />
              </radialGradient>
              <linearGradient id="siri-bg" x1="0" y1="0" x2="0.3" y2="1">
                <stop offset="0" stopColor="#2a5f6c" />
                <stop offset="0.45" stopColor="#2c8f8a" />
                <stop offset="1" stopColor="#1c5bb4" />
              </linearGradient>
              <clipPath id="siri-clip"><circle cx="14" cy="14" r="14" /></clipPath>
            </defs>
            <g clipPath="url(#siri-clip)">
              <rect width="28" height="28" fill="url(#siri-bg)" />
              <path d="M0 6Q10 6 14 14Q10 22 2 24Z" fill="#d8336f" />
              <path d="M14 14Q20 4 26 8Q28 14 24 17Z" fill="#1fae7c" />
              <path d="M14 14Q26 14 26 22L18 28Q12 20 14 14Z" fill="#2579d8" />
              <path d="M14 14L4 24Q10 29 16 27Z" fill="#34317f" />
              <circle cx="15" cy="14" r="8" fill="url(#siri-core)" />
            </g>
            <circle cx="14" cy="14" r="13.3" fill="none" stroke="#7fb0bb" strokeOpacity="0.5" />
          </StatusIcon>
          <Clock>
            <ClockPart $tracking={-0.35}>Mon 24 Apr</ClockPart>
            <ClockPart $tracking={0.5}>15:29</ClockPart>
          </Clock>
        </MenuBar>

        <Window>
          <TitleBar>
            <Lights>
              <Light $fill="#ff5f57" $rim="#e2443f" />
              <Light $fill="#febc3f" $rim="#e0a033" />
              <Light $fill="#16c94b" $rim="#14ae3a" />
            </Lights>
            <Title>Typing Tutor</Title>
          </TitleBar>
          <Board>
            <Zone $color="#c0c0c0" $height={49} $edge="#a8a8a8" />
            {words.map((w, i) => (
              <FallingWord key={i} $x={w.x} $y={w.y} $tracking={w.tracking}>{w.text}</FallingWord>
            ))}
            <Zone $color="#ffafaf" $height={50} />
          </Board>
          <Controls>
            <ScoreRow>
              <Stat $color="#0000ff" $width={155}>Caught: 4</Stat>
              <Stat $color="#ff0000" $width={144}>Missed:1</Stat>
              <Stat $color="#000000" $width={146}>Score:28</Stat>
              <WordInput aria-label="Word" />
            </ScoreRow>
            <ButtonRow>
              <PushButton $width={122}>Start</PushButton>
              <PushButton $width={132}>Pause</PushButton>
              <PushButton $width={192}>Quit Game</PushButton>
              <PushButton $width={122}>Exit</PushButton>
            </ButtonRow>
          </Controls>
        </Window>

        <DockBar>
          {dockItems.map((item, i) => {
            if (item === "divider") return <Divider key={i} />;
            const Icon = item.icon;
            return (
              <Slot key={item.name}>
                <Icon />
                {item.dot && <Running $tint={item.dot} />}
                {item.badge && <Badge>{item.badge}</Badge>}
              </Slot>
            );
          })}
        </DockBar>
      </Desktop>
    </>
  );
}
